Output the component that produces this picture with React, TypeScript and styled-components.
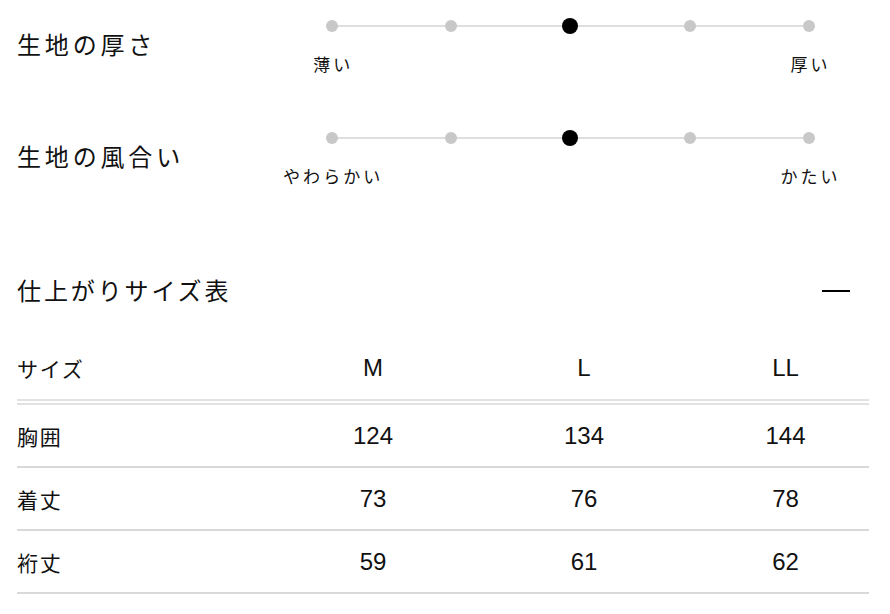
import React from 'react';
import styled, { createGlobalStyle } from 'styled-components';

const GlobalStyle = createGlobalStyle`
  body {
    margin: 0;
    background: #ffffff;
    color: #111111;
    font-family: "Liberation Sans", "Noto Sans CJK JP", sans-serif;
  }
`;

const Page = styled.div`
  padding: 18px 21px 0 17px;
`;

const FeelSection = styled.section`
  display: flex;
  align-items: flex-start;
  height: 112px;
`;

const FeelTitle = styled.h3`
  margin: 10px 0 0;
  width: 255px;
  font-size: 24px;
  font-weight: 400;
  line-height: 32px;
  letter-spacing: 0.16em;
  font-family: "Noto Sans CJK JP", sans-serif;
`;

const Scale = styled.div`
  width: 598px;
`;

const Track = styled.div`
  position: relative;
  height: 16px;
  margin: 0 60px;
  display: flex;
  justify-content: space-between;
  align-items: center;

  &::before {
    content: '';
    position: absolute;
    left: 0;
    right: 0;
    top: 7px;
    height: 2px;
    background: #dedede;
  }
`;

const DotSlot = styled.div`
  position: relative;
  width: 0;
  display: flex;
  justify-content: center;
`;

const Dot = styled.span<{ $active: boolean }>`
  flex: none;
  width: ${(p) => (p.$active ? 16 : 12)}px;
  height: ${(p) => (p.$active ? 16 : 12)}px;
  border-radius: 50%;
  background: ${(p) => (p.$active ? '#000000' : '#c8c8c8')};
`;

const EndLabels = styled.div`
  display: flex;
  justify-content: space-between;
  margin-top: 20px;
`;

const EndLabel = styled.span`
  width: 120px;
  text-align: center;
  font-size: 17px;
  line-height: 20px;
  letter-spacing: 0.18em;
  text-indent: 0.18em;
  font-family: "Noto Sans CJK JP", sans-serif;
`;

const HeadingRow = styled.div`
  display: flex;
  justify-content: space-between;
  align-items: center;
  margin-top: 32px;
  height: 32px;
`;

const Heading = styled.h2`
  margin: 0;
  font-size: 24px;
  font-weight: 400;
  line-height: 32px;
  letter-spacing: 0.12em;
  font-family: "Noto Sans CJK JP", sans-serif;
`;

const Collapse = styled.span`
  width: 28px;
  height: 2px;
  margin-right: 19px;
  margin-top: 2px;
  background: #000000;
`;

const Table = styled.div`
  margin-top: 31px;
`;

const Row = styled.div<{ $header?: boolean }>`
  display: grid;
  grid-template-columns: 263px 186px 236px 1fr;
  align-items: center;
  height: ${(p) => (p.$header ? 62 : 61)}px;
  border-bottom: ${(p) => (p.$header ? '6px double #e2e2e2' : '2px solid #d9d9d9')};
`;

const RowLabel = styled.div`
  font-size: 21px;
  letter-spacing: 0.08em;
  font-family: "Noto Sans CJK JP", sans-serif;
`;

const Cell = styled.div`
  text-align: center;
  font-size: 24px;
`;

const feels = [
  { title: '生地の厚さ', low: '薄い', high: '厚い', value: 2 },
  { title: '生地の風合い', low: 'やわらかい', high: 'かたい', value: 2 },
];

const sizes = ['M', 'L', 'LL'];

const measures = [
  { label: '胸囲', values: [124, 134, 144] },
  { label: '着丈', values: [73, 76, 78] },
  { label: '裄丈', values: [59, 61, 62] },
];

const App: React.FC = () => {
  return (
    <Page>
      <GlobalStyle />
      {feels.map((f) => (
        <FeelSection key={f.title}>
          <FeelTitle>{f.title}</FeelTitle>
          <Scale>
            <Track>
              {[0, 1, 2, 3, 4].map((i) => (
                <DotSlot key={i}>
                  <Dot $active={i === f.value} />
                </DotSlot>
              ))}
            </Track>
            <EndLabels>
              <EndLabel>{f.low}</EndLabel>
              <EndLabel>{f.high}</EndLabel>
            </EndLabels>
          </Scale>
        </FeelSection>
      ))}

      <HeadingRow>
        <Heading>仕上がりサイズ表</Heading>
        <Collapse />
      </HeadingRow>

      <Table>
        <Row $header>
          <RowLabel>サイズ</RowLabel>
          {sizes.map((s) => (
            <Cell key={s}>{s}</Cell>
          ))}
        </Row>
        {measures.map((m) => (
          <Row key={m.label}>
            <RowLabel>{m.label}</RowLabel>
            {m.values.map((v, i) => (
              <Cell key={i}>{v}</Cell>
            ))}
          </Row>
        ))}
      </Table>
    </Page>
  );
};

export default App;
